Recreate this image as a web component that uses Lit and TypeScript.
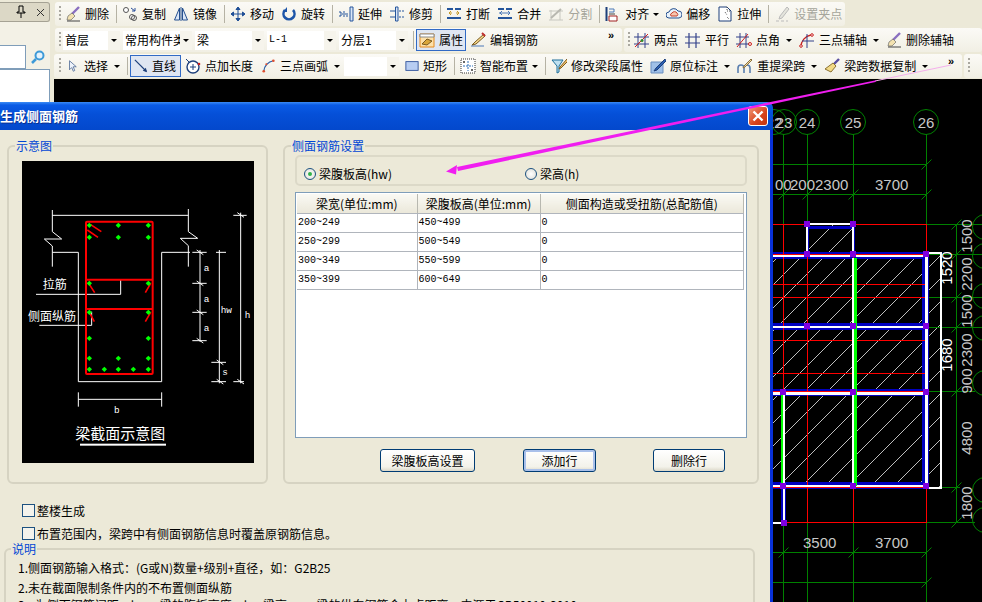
import { LitElement, html, svg, css } from "lit";
import { customElement } from "lit/decorators.js";

const brush = (handle: string, head: string) => svg`
  <path d="M2 15h13" stroke="#444" stroke-width="1"/>
  <path d="M14 1 7 8" stroke="${handle}" stroke-width="2.4"/>
  <path d="M7 7 10 10 6 14 2 14 3 10Z" fill="${head}" stroke="#555" stroke-width=".6"/>`;

const ICONS: Record<string, any> = {
  del: brush("#8a6fc0", "#f3e2b0"),
  copy: svg`<circle cx="4" cy="4" r="2.5" fill="#fff" stroke="#555"/><circle cx="10" cy="11" r="2.5" fill="#fff" stroke="#555"/><circle cx="12" cy="12" r="2.5" fill="none" stroke="#555"/><path d="M9 2l4 3M13 2v3h-3" stroke="#2a4f9a" fill="none"/>`,
  mirror: svg`<path d="M6.5 2v12H1.5ZM9.5 2v12h5Z" fill="#dbe7f7" stroke="#25508f"/><path d="M8 1v14" stroke="#25508f"/>`,
  move: svg`<path d="M8 1v14M1 8h14M8 1 6 3.5h4ZM8 15l-2-2.500h4ZM1 8l2.500-2v4ZM15 8l-2.500-2v4Z" stroke="#1f4f96" fill="#1f4f96"/>`,
  rotate: svg`<path d="M4 4a5.500 5.500 0 1 0 8 0" fill="none" stroke="#1d55a8" stroke-width="2.600"/><path d="M6 1v5H2Z" fill="#1d55a8"/>`,
  extend: svg`<path d="M1 6h2v4H1M4 8h6" fill="none" stroke="#24559c"/><path d="M5 6h2M5 10h5" stroke="#24559c" stroke-dasharray="2 1"/><path d="M12 1h3v14h-3Z" fill="#d9e6f7" stroke="#24559c"/>`,
  trim: svg`<path d="M1 5h5M1 11h5M10 5h2M13 5h2M10 11h2M13 11h2" stroke="#24559c"/><path d="M6.500 1h2.500v14H6.500Z" fill="#d9e6f7" stroke="#24559c"/>`,
  cut: svg`<path d="M1 3h6M9 3h6M1 12h14" stroke="#24559c" stroke-width="2"/><path d="M3 7h3M10 7h3M5 5l-2 2 2 2M11 5l2 2-2 2" fill="none" stroke="#c49a2a"/>`,
  merge: svg`<path d="M1 3h6M9 3h6M1 12h14" stroke="#24559c" stroke-width="2"/><path d="M2 7h11M5 5 3 7l2 2M11 5l2 2-2 2" fill="none" stroke="#4a78b8"/>`,
  split: svg`<path d="M1 14h14M3 4v10M12 4v10M1 5h14" stroke="#c8c8c0"/><path d="M3 12 13 3" stroke="#b8b8b0" stroke-width="2"/>`,
  align: svg`<path d="M1.500 1v14" stroke="#1d3f7a" stroke-width="2"/><path d="M4 3h5v3H4" fill="none" stroke="#4a78b8"/><path d="M4 10h8v5H4Z" fill="#fff" stroke="#a02020"/><path d="M4 8h6" stroke="#444"/>`,
  offset: svg`<path d="M3 12a3 3 0 0 1 0-6 5 5 0 0 1 9-1 3.500 3.500 0 0 1 1 7Z" fill="#e9f2fb" stroke="#25508f"/><path d="M5 10a2 2 0 0 1 1-3 3 3 0 0 1 5 0 2 2 0 0 1 0 3Z" fill="#f6c6b0" stroke="#c8402a"/>`,
  stretch: svg`<path d="M2 1h8l4 4v10H2Z" fill="#fff" stroke="#1d3f7a"/><path d="M10 1v4h4M8 6l2 3M10 11l2 2" fill="none" stroke="#555" stroke-dasharray="1 1"/>`,
  grip: svg`<path d="M2 15h3M7 15h3M12 15h2" stroke="#bbb"/><path d="M13 1 6 10l-1 3 3-1 7-9Z" fill="#e4e4dc" stroke="#bbb"/>`,
  props: svg`<path d="M1 2h14v13H1Z" fill="#fde0a8" stroke="#e48a1e"/><path d="M1 2h14v3H1Z" fill="#fff" stroke="#8a8a8a"/><path d="M3 12 8 7l5 2-5 4Z" fill="#d9a63a" stroke="#7a5a20"/>`,
  edit: svg`<path d="M1 14h13" stroke="#4a78b8"/><path d="M14 2 5 10l-3 3 4-1 9-8Z" fill="#f6d98e" stroke="#7a5a20"/><path d="M12 1l3 3" stroke="#c03030" stroke-width="2"/>`,
  twoPt: svg`<path d="M4 1v15M11 1v15M0 5h15M0 12h15" stroke="#33418a"/><path d="M1 15 14 2" stroke="#d02020"/><circle cx="8" cy="8.500" r="1.500" fill="#2e8b2e"/>`,
  parallel: svg`<path d="M4 1v15M11 1v15M0 5h15M0 11h15" stroke="#33418a" stroke-width="1.200"/>`,
  angle: svg`<path d="M4 1v15M10 1v15M0 5h13M0 12h13" stroke="#33418a"/><path d="M1 15 12 2" stroke="#d02020"/><circle cx="14" cy="12" r="1.500" fill="none" stroke="#d02020"/>`,
  arcAxis: svg`<path d="M2 15a12 12 0 0 1 10-12" fill="none" stroke="#c82020" stroke-width="1.300"/><path d="M8 2v14M3 9h12" stroke="#33418a"/><circle cx="13" cy="3" r="1.300" fill="#fff" stroke="#c82020"/><circle cx="2" cy="14" r="1.300" fill="#fff" stroke="#c82020"/>`,
  pointer: svg`<path d="M2 1v12l3-3 2 5 2-1-2-5h4Z" fill="#eef3fb" stroke="#44618f"/>`,
  line: svg`<path d="M1 1 14 14" stroke="#1d3f7a" stroke-width="1.300"/><path d="M15 15l-5-1.500 3.500-3.500Z" fill="#1d3f7a"/>`,
  ptLen: svg`<circle cx="8" cy="9" r="6" fill="#fff" stroke="#1d3f7a" stroke-width="1.400"/><path d="M8 6v6M5 9h6" stroke="#1d3f7a"/><path d="M1 1l3 3" stroke="#1d3f7a"/><circle cx="14" cy="6" r="1.300" fill="#c82020"/>`,
  arc: svg`<path d="M2 14A13 13 0 0 1 13 2" fill="none" stroke="#2b5fa8" stroke-width="1.400"/><circle cx="13" cy="2" r="1.500" fill="#e05030"/><circle cx="2" cy="14" r="1.500" fill="#e05030"/><circle cx="5" cy="6" r="1.200" fill="#e05030"/>`,
  rect: svg`<rect x="1" y="3" width="14" height="10" fill="#b7cdf2" stroke="#2b4f98"/>`,
  smart: svg`<rect x="1" y="1" width="14" height="14" fill="#fff" stroke="#333" stroke-dasharray="1 1"/><path d="M8 3v10M3 8h10" stroke="#2b6fb8" stroke-dasharray="2 1"/><circle cx="4" cy="4" r="1" fill="#333"/><circle cx="12" cy="12" r="1" fill="#333"/>`,
  modify: svg`<path d="M1 2h11L8 8v6l-2 1V8Z" fill="#bfe0f0" stroke="#1f6f9a"/><path d="M16 1 9 9l-1 2 2-1 7-7Z" fill="#f2c26a" stroke="#7a5a20"/>`,
  annotate: svg`<path d="M1 4h12v11H1Z" fill="#9fc0e8" stroke="#6b8fc0"/><path d="M15 1 6 10l-2 3 3-1 9-9Z" fill="#2b5fb0" stroke="#1d3f7a"/>`,
  reSpan: svg`<path d="M1 15v-5a3 3 0 0 1 6 0v5M7 15v-5a3 3 0 0 1 6 0v5" fill="none" stroke="#5a7fb0" stroke-width="1.600"/><path d="M14 1 7 8l-1 2 2-1 7-7Z" fill="#f2dca0" stroke="#8a7040"/>`,
  broom: svg`<path d="M15 1 9 7" stroke="#5a4fa0" stroke-width="2.400"/><path d="M9 5 12 8 7 14 1 11Z" fill="#f2da86" stroke="#8a7030"/>`,
};

const icon = (name: string, w = 16) =>
  html`<svg class="ico" width=${w} height="16" viewBox="0 0 16 16">${ICONS[name]}</svg>`;

const tool = (name: string, label: string, arrow = false, w = 16, cls = "") => html`
  <span class="tool ${cls}">${icon(name, w)}<span>${label}</span>${arrow ? html`<i class="caret"></i>` : ""}</span>`;

const sep = html`<i class="sep"></i>`;
const grip = html`<i class="grip"></i>`;
const more = html`<span class="more">»</span>`;

// CAD canvas data, in page coordinates
const REBAR_Y = [224.5, 254.5, 284.5, 297.5, 340.5, 373.5, 391.5, 487.5, 522.5];
const AXES = [783.5, 807.5, 853.5, 926.5];
const COLS: [number, number][] = [
  [807, 224], [853, 224], [807, 254], [853, 254], [926, 254],
  [807, 326], [853, 326], [926, 326], [783, 392], [853, 392], [926, 392],
  [783, 486], [853, 486], [926, 486], [784, 523],
];
const BUBBLES: [number, string][] = [[774, "22"], [784, "23"], [807, "24"], [853, "25"], [926, "26"]];
const SIDE_DIMS: [number, string][] = [
  [236, "1500"], [274, "2200"], [311, "1500"], [350, "2300"], [381, "900"], [438, "4800"], [503, "1800"],
];
const SIDE_BUBBLES = [227, 256, 296, 328, 383, 490, 520];
const TICKS: [number, number][] = [
  [783.5, 194.5], [807.5, 194.5], [853.5, 194.5], [926.5, 194.5], [926.5, 164.5],
  [783.5, 552.5], [853.5, 552.5], [926.5, 552.5], [926.5, 582.5],
  [956.5, 224.5], [956.5, 254.5], [956.5, 297.5], [956.5, 327.5], [956.5, 391.5], [956.5, 487.5], [956.5, 522.5],
];

// dots of the section sketch, in the sketch's own 3x units
const DOTS = [
  [268, 286], [355, 286], [445, 286], [268, 322], [355, 322], [445, 322], [268, 460], [445, 460],
  [268, 547], [445, 547], [268, 625], [445, 625], [268, 685], [355, 685], [445, 685],
  [268, 718], [313, 718], [355, 718], [400, 718], [445, 718],
];

@customElement("app-root")
export class AppRoot extends LitElement {
  static styles = css`
    :host {
      display: block;
      width: 982px;
      height: 602px;
      overflow: hidden;
      font-family: "Noto Sans CJK SC", "Liberation Sans", sans-serif;
      font-size: 12px;
      line-height: 16px;
      color: #000;
    }
    .app {
      position: relative;
      display: grid;
      grid-template-columns: 54px 1fr;
      width: 982px;
      height: 602px;
      overflow: hidden;
      background: #ece9d8;
    }

    /* left dock */
    .dock { display: flex; flex-direction: column; padding-top: 2px; }
    .dock-head {
      display: flex;
      justify-content: flex-end;
      align-items: center;
      gap: 10px;
      width: 50px;
      height: 20px;
      padding-right: 4px;
      box-sizing: border-box;
      background: #dcd8c6;
      border: 1px solid #a5a294;
      border-left: none;
      border-radius: 0 3px 3px 0;
    }
    .dock-fill { width: 50px; height: 23px; background: #f3f1e6; }
    .dock-search { display: flex; width: 50px; height: 24px; background: #f3f1e6; }
    .dock-input { width: 26px; box-sizing: border-box; background: #fff; border: 1px solid #7f9db9; border-left: none; }
    .dock-btn { display: flex; align-items: center; justify-content: center; width: 20px; margin-left: 2px; }
    .dock-list { width: 50px; flex: 1; box-sizing: border-box; background: #fff; border-right: 1px solid #7f9db9; border-top: 1px solid #7f9db9; }

    /* toolbars */
    .main { display: flex; flex-direction: column; min-width: 0; }
    .bars { height: 79px; display: flex; flex-direction: column; padding-top: 2px; box-sizing: border-box; gap: 2px; }
    .row { display: flex; height: 24px; gap: 2px; }
    .band {
      display: flex;
      align-items: center;
      height: 24px;
      box-sizing: border-box;
      padding-left: 4px;
      background: linear-gradient(#fbfaf6, #f1efe4);
      border-radius: 3px;
      white-space: nowrap;
    }
    .b1 { width: 790px; margin-left: 1px; }
    .b2 { width: 567px; margin-left: 1px; }
    .b3 { width: 358px; }
    .b4 { width: 908px; padding-left: 5px; }
    .stub { flex: 1; }
    .grip {
      width: 2px;
      height: 16px;
      flex: none;
      background: repeating-linear-gradient(#aaa8a0 0 2px, transparent 2px 4px);
    }
    .sep { width: 1px; height: 18px; margin: 0 1px 0 4px; flex: none; background: #b5b2a4; }
    .tool { display: inline-flex; align-items: center; gap: 4px; height: 22px; padding: 0 3px 0 4px; flex: none; box-sizing: border-box; }
    .tool.off { color: #a5a59b; }
    .tool.on { margin-left: 1px; padding: 0 2px; background: #dfe6f2; border: 1px solid #316ac5; }
    .tool.lined { padding: 0 4px 0 3px; }
    .tool.indent { margin-left: 3px; }
    .tool.nudge { margin-left: 2px; }
    .ico { flex: none; display: block; }
    .caret {
      width: 0;
      height: 0;
      margin-left: 2px;
      flex: none;
      border: 3px solid transparent;
      border-top: 3px solid #000;
      border-bottom: none;
    }
    .tool.tight .caret { margin-left: 0; }
    .more { margin-left: auto; padding-right: 8px; align-self: flex-start; font: bold 11px/14px "Liberation Sans", sans-serif; }
    .combo {
      display: flex;
      align-items: center;
      width: 69px;
      height: 19px;
      margin-right: 3px;
      background: #fff;
      flex: none;
    }
    .combo.first { width: 57px; margin-left: 2px; }
    .combo.last { margin-right: 1px; }
    .combo.blank { width: 55px; margin: 0 2px 0 1px; }
    .combo span { flex: 1; overflow: hidden; padding-left: 2px; white-space: nowrap; }
    .combo b {
      display: flex;
      align-items: center;
      justify-content: center;
      width: 12px;
      height: 19px;
      background: #f6f4ec;
    }
    .combo .caret { margin: 0; }
    .lat { font-family: "Liberation Mono", monospace; font-size: 10px; }

    .canvas { flex: 1; background: #000; min-height: 0; }
    .canvas svg { display: block; }
    .cad-text { font: 15px "Liberation Sans", sans-serif; fill: #c8c8c8; }

    /* dialog window */
    .dialog {
      position: absolute;
      left: 0;
      top: 102px;
      width: 773px;
      height: 500px;
      display: flex;
      flex-direction: column;
    }
    .title {
      display: flex;
      align-items: center;
      justify-content: space-between;
      height: 28px;
      flex: none;
      padding-right: 5px;
      box-sizing: border-box;
      border-radius: 0 6px 0 0;
      background: linear-gradient(#3b8cf5 0, #0a5be6 3px, #0550d8 12px, #0348cc 100%);
      color: #fff;
      font-size: 13px;
      font-weight: 700;
      text-shadow: 1px 1px 0 #0a2f90;
    }
    .close {
      width: 20px;
      height: 20px;
      box-sizing: border-box;
      border: 1px solid #fff;
      border-radius: 3px;
      background: linear-gradient(135deg, #f09a78, #d8431c 60%, #c23410);
      display: flex;
      align-items: center;
      justify-content: center;
    }
    .body {
      flex: 1;
      min-height: 0;
      padding: 8px 0 0 4px;
      background: #ece9d8;
      border-right: 3px solid #0831d9;
      overflow: hidden;
    }
    .groups { display: flex; gap: 15px; margin-left: 3px; }
    fieldset {
      margin: 0;
      padding: 0;
      min-width: 0;
      box-sizing: border-box;
      border: 2px solid #d6d3c2;
      border-radius: 6px;
    }
    legend { margin-left: 6px; padding: 0 1px; color: #0046d5; line-height: 16px; }
    .sketch-group { width: 261px; height: 346px; }
    .sketch { display: block; margin: 7px 0 0 13px; background: #000; }
    .sketch text { fill: #fff; font-family: "Noto Sans CJK SC", sans-serif; }
    .sketch .dim { font-family: "Liberation Mono", monospace; font-size: 28px; }
    .set-group { width: 476px; height: 346px; }
    .set-inner { padding: 1px 0 0 10px; }
    .radios {
      display: flex;
      align-items: center;
      width: 452px;
      height: 31px;
      padding: 6px 0 0 7px;
      box-sizing: border-box;
      border: 2px solid #dcd9c8;
      border-radius: 5px;
    }
    .radio { display: flex; align-items: center; gap: 3px; width: 221px; flex: none; }
    .dot {
      width: 12px;
      height: 12px;
      box-sizing: border-box;
      border: 1px solid #1c5180;
      border-radius: 50%;
      background: radial-gradient(#fff, #dcdcd4);
      display: flex;
      align-items: center;
      justify-content: center;
    }
    .dot i { width: 4px; height: 4px; border-radius: 50%; background: #31b24a; }
    .grid-box {
      width: 452px;
      height: 246px;
      margin-top: 6px;
      padding: 1px;
      box-sizing: border-box;
      background: #fff;
      border: 1px solid #7f9db9;
    }
    table { width: 447px; border-collapse: collapse; table-layout: fixed; }
    th {
      height: 19px;
      padding: 0;
      font-weight: 400;
      background: linear-gradient(#faf9f4, #ebe8da);
      border-right: 1px solid #b8b8b0;
      border-bottom: 1px solid #b0b5bc;
    }
    td {
      height: 18px;
      padding: 0 0 0 1px;
      font-family: "Liberation Mono", monospace;
      font-size: 10px;
      border-right: 1px solid #b0b5bc;
      border-bottom: 1px solid #b0b5bc;
    }
    .btns { display: flex; margin: 11px 0 0 85px; }
    .btn {
      display: flex;
      align-items: center;
      justify-content: center;
      height: 23px;
      box-sizing: border-box;
      border: 1px solid #003c74;
      border-radius: 3px;
      background: linear-gradient(#fff, #f3f2ea 80%, #dcd8c8);
    }
    .b-a { width: 95px; margin-right: 48px; }
    .b-b { width: 73px; margin-right: 57px; box-shadow: inset 0 0 0 2px #a9c0ea; }
    .b-c { width: 72px; }
    .checks { display: flex; flex-direction: column; gap: 10px; margin: 20px 0 0 18px; }
    .check { display: flex; align-items: center; gap: 2px; height: 13px; }
    .box { width: 13px; height: 13px; box-sizing: border-box; border: 1px solid #1c5180; background: #f4f3ec; }
    .notes { width: 751px; height: 120px; margin-top: 3px; }
    .notes legend { margin-left: 5px; line-height: 12px; }
    .note-lines { padding: 5px 0 0 12px; }
    .note-lines div { height: 20px; white-space: nowrap; }
    .note-lines .clip { margin-top: -3px; }
    .pink { position: absolute; left: 0; top: 0; pointer-events: none; }
  `;

  private cad() {
    return html`<svg width="928" height="523" viewBox="54 79 928 523" shape-rendering="crispEdges">
      <defs>
        <pattern id="hatch" width="23" height="23" patternUnits="userSpaceOnUse">
          <path d="M0 23 23 0" stroke="#bdbdbd" stroke-width="1" shape-rendering="auto"/>
        </pattern>
      </defs>
      <rect x="773" y="254" width="168" height="234" fill="url(#hatch)"/>
      <rect x="807" y="224" width="46" height="30" fill="url(#hatch)"/>
      <!-- grid lines -->
      <g stroke="#008000" fill="none">
        ${AXES.map((x) => svg`<path d="M${x} 134V224M${x} 522V602"/>`)}
        <path d="M926.5 134V254M773 164.500H926M773 194.500H926M773 552.500H926M773 582.500H926"/>
        <path d="M926 224.500H982M926 254.500H982M926 297.500H982M926 327.500H982M926 391.500H975M926 487.500H960M926 522.500H975M956.500 224V522"/>
        ${TICKS.map(([x, y]) => svg`<path shape-rendering="auto" d="M${x - 5} ${y + 5}L${x + 5} ${y - 5}"/>`)}
        ${BUBBLES.map(([x]) => svg`<circle shape-rendering="auto" cx=${x} cy="122" r="12.500"/>`)}
        ${SIDE_BUBBLES.map((y) => svg`<circle shape-rendering="auto" cx="985" cy=${y} r="12.500"/>`)}
      </g>
      ${BUBBLES.map(([x, t]) => svg`<text class="cad-text" x=${x} y="127.500" text-anchor="middle">${t}</text>`)}
      <text class="cad-text" x="775" y="189.500">00</text>
      <text class="cad-text" x="790" y="189.500">200</text>
      <text class="cad-text" x="815" y="189.500">2300</text>
      <text class="cad-text" x="875" y="189.500">3700</text>
      <text class="cad-text" x="803" y="547.500">3500</text>
      <text class="cad-text" x="875" y="547.500">3700</text>
      ${SIDE_DIMS.map(([y, t]) => svg`<text class="cad-text" text-anchor="middle" transform="translate(972 ${y}) rotate(-90)">${t}</text>`)}
      <!-- blue beams -->
      <g fill="#0000c0">
        <rect x="773" y="252" width="156" height="7"/>
        <rect x="773" y="323" width="156" height="7"/>
        <rect x="773" y="389" width="156" height="7"/>
        <rect x="773" y="482" width="156" height="7"/>
        <rect x="922" y="252" width="7" height="237"/>
        <rect x="806" y="224" width="3" height="30"/>
        <rect x="852" y="224" width="3" height="30"/>
        <rect x="806" y="226" width="48" height="3"/>
        <rect x="781" y="489" width="5" height="35"/>
      </g>
      <!-- red axes -->
      <g stroke="#ff0000" fill="none">
        ${REBAR_Y.map((y) => svg`<path d="M773 ${y}H926.500"/>`)}
        ${AXES.map((x) => svg`<path d="M${x} 224V522"/>`)}
      </g>
      <!-- white and green walls -->
      <g fill="#fff">
        <rect x="773" y="255" width="155" height="2"/>
        <rect x="773" y="326" width="155" height="2"/>
        <rect x="773" y="392" width="155" height="3"/>
        <rect x="773" y="485" width="155" height="2"/>
        <rect x="925" y="255" width="3" height="232"/>
        <rect x="806" y="223" width="47" height="2"/>
        <rect x="806" y="224" width="2" height="30"/>
        <rect x="852" y="224" width="2" height="30"/>
        <rect x="852" y="258" width="2" height="228"/>
        <rect x="783" y="395" width="2" height="127"/>
        <rect x="773" y="522" width="10" height="2"/>
        <rect x="927" y="252" width="14" height="2"/>
        <rect x="940" y="252" width="2" height="237"/>
        <rect x="927" y="487" width="14" height="2"/>
      </g>
      <g fill="#00ff00">
        <rect x="854" y="258" width="3" height="228"/>
        <rect x="781" y="395" width="2" height="88"/>
      </g>
      <g fill="#8000e0">
        ${COLS.map(([x, y]) => svg`<rect x=${x - 3} y=${y - 3} width="6" height="6"/>`)}
      </g>
      <text class="cad-text" style="fill:#fff" text-anchor="middle" transform="translate(952 268) rotate(-90)">1520</text>
      <text class="cad-text" style="fill:#fff" text-anchor="middle" transform="translate(952 355) rotate(-90)">1680</text>
    </svg>`;
  }

  private sketch() {
    return html`<svg class="sketch" width="232" height="302" viewBox="66 93 696 906">
      <g fill="none" stroke="#fff" stroke-width="3">
        <path d="M157 240V305L185 327H133L157 348V410M157 256H565M565 237V305L593 325H541L565 347V410"/>
        <path d="M157 367H235V755H485V367H570"/>
        <path d="M108 493H362V449M118 586H275V545"/>
        <path d="M600 360V635M577 367H620M577 460H620M577 547H620M577 632H620"/>
        <path d="M658 360V760M648 367H678M634 697H678M634 755H678"/>
        <path d="M722 248V760M700 256H740M700 755H732"/>
        <path d="M235 808H485M235 787V830M485 787V830"/>
        <path d="M590 360l20 14M590 453l20 14M590 540l20 14M590 625l20 14M650 690l20 14M650 748l20 14M712 248l20 14M712 748l20 14"/>
      </g>
      <g fill="none" stroke="#ff0000" stroke-width="6">
        <rect x="258" y="275" width="200" height="457" rx="3"/>
        <path d="M258 449H458M258 537H458"/>
        <path d="M272 284 304 305M262 300 294 322M266 460 284 488M452 460 436 488M268 547 283 575M452 547 436 575" stroke-width="5"/>
      </g>
      <g fill="#00ff00">
        ${DOTS.map(([x, y]) => svg`<path d="M${x - 8} ${y}L${x} ${y - 8}L${x + 8} ${y}L${x} ${y + 8}Z"/>`)}
      </g>
      <text x="128" y="478" font-size="36">拉筋</text>
      <text x="84" y="572" font-size="36">侧面纵筋</text>
      <text class="dim" x="611" y="422">a</text>
      <text class="dim" x="611" y="515">a</text>
      <text class="dim" x="611" y="603">a</text>
      <text class="dim" x="662" y="550">hw</text>
      <text class="dim" x="667" y="735">s</text>
      <text class="dim" x="734" y="565">h</text>
      <text class="dim" x="342" y="848">b</text>
      <text x="226" y="927" font-size="45">梁截面示意图</text>
      <rect x="240" y="941" width="258" height="6" fill="#fff"/>
    </svg>`;
  }

  render() {
    const rows = [
      ["200~249", "450~499"],
      ["250~299", "500~549"],
      ["300~349", "550~599"],
      ["350~399", "600~649"],
    ];
    return html`
      <div class="app">
        <div class="dock">
          <div class="dock-head">
            <svg width="10" height="14" viewBox="0 0 10 14"><path d="M3 1h4v6h2v1H1V7h2ZM5 8v5" fill="none" stroke="#000"/></svg>
            <svg width="9" height="9" viewBox="0 0 9 9"><path d="M1 1l7 7M8 1 1 8" stroke="#333"/></svg>
          </div>
          <div class="dock-fill"></div>
          <div class="dock-search">
            <div class="dock-input"></div>
            <div class="dock-btn">
              <svg width="16" height="16" viewBox="0 0 16 16"><circle cx="9.500" cy="6.500" r="4" fill="#e4f2fc" stroke="#3d9ad8" stroke-width="2"/><path d="M6 10l-4 4" stroke="#3d9ad8" stroke-width="2.500"/></svg>
            </div>
          </div>
          <div class="dock-list"></div>
        </div>

        <div class="main">
          <div class="bars">
            <div class="row">
              <div class="band b1">
                ${grip}${tool("del", "删除")}${sep}${tool("copy", "复制")}${tool("mirror", "镜像")}${sep}
                ${tool("move", "移动")}${tool("rotate", "旋转")}${sep}${tool("extend", "延伸")}${tool("trim", "修剪")}${sep}
                ${tool("cut", "打断")}${tool("merge", "合并")}${tool("split", "分割", false, 16, "off")}${sep}
                ${tool("align", "对齐", true, 16, "tight")}${tool("offset", "偏移")}${tool("stretch", "拉伸")}${sep}
                ${tool("grip", "设置夹点", false, 16, "off")}
              </div>
            </div>
            <div class="row">
              <div class="band b2">
                ${grip}
                <div class="combo first"><span>首层</span><b><i class="caret"></i></b></div>
                <div class="combo"><span>常用构件类型</span><b><i class="caret"></i></b></div>
                <div class="combo"><span>梁</span><b><i class="caret"></i></b></div>
                <div class="combo"><span class="lat">L-1</span><b><i class="caret"></i></b></div>
                <div class="combo last"><span>分层1</span><b><i class="caret"></i></b></div>
                ${sep}${tool("props", "属性", false, 16, "on")}${tool("edit", "编辑钢筋")}${more}
              </div>
              <div class="band b3">
                ${grip}${tool("twoPt", "两点")}${tool("parallel", "平行")}${tool("angle", "点角", true)}
                ${tool("arcAxis", "三点辅轴", true)}${tool("del", "删除辅轴")}
              </div>
            </div>
            <div class="row">
              <div class="band b4">
                ${grip}${tool("pointer", "选择", true, 12, "indent")}${sep}${tool("line", "直线", false, 14, "on lined")}
                ${tool("ptLen", "点加长度")}${tool("arc", "三点画弧", true, 14, "nudge")}
                <div class="combo blank"><span></span><b><i class="caret"></i></b></div>
                ${tool("rect", "矩形", false, 14)}${sep}${tool("smart", "智能布置", true, 16, "tight")}${sep}
                ${tool("modify", "修改梁段属性")}${tool("annotate", "原位标注", true)}${tool("reSpan", "重提梁跨", true)}
                ${tool("broom", "梁跨数据复制", true)}${more}
              </div>
              <div class="band stub">${grip}</div>
            </div>
          </div>
          <div class="canvas">${this.cad()}</div>
        </div>

        <div class="dialog">
          <div class="title">
            <span>生成侧面钢筋</span>
            <div class="close">
              <svg width="12" height="12" viewBox="0 0 12 12"><path d="M1.500 1.500l9 9M10.500 1.500l-9 9" stroke="#fff" stroke-width="2.400"/></svg>
            </div>
          </div>
          <div class="body">
            <div class="groups">
              <fieldset class="sketch-group">
                <legend>示意图</legend>
                ${this.sketch()}
              </fieldset>
              <fieldset class="set-group">
                <legend>侧面钢筋设置</legend>
                <div class="set-inner">
                  <div class="radios">
                    <label class="radio"><span class="dot"><i></i></span>梁腹板高(hw)</label>
                    <label class="radio"><span class="dot"></span>梁高(h)</label>
                  </div>
                  <div class="grid-box">
                    <table>
                      <colgroup><col style="width:120px" /><col style="width:123px" /><col /></colgroup>
                      <tr><th>梁宽(单位:mm)</th><th>梁腹板高(单位:mm)</th><th>侧面构造或受扭筋(总配筋值)</th></tr>
                      ${rows.map((r) => html`<tr><td>${r[0]}</td><td>${r[1]}</td><td>0</td></tr>`)}
                    </table>
                  </div>
                  <div class="btns">
                    <div class="btn b-a">梁腹板高设置</div>
                    <div class="btn b-b">添加行</div>
                    <div class="btn b-c">删除行</div>
                  </div>
                </div>
              </fieldset>
            </div>
            <div class="checks">
              <label class="check"><span class="box"></span>整楼生成</label>
              <label class="check"><span class="box"></span>布置范围内，梁跨中有侧面钢筋信息时覆盖原钢筋信息。</label>
            </div>
            <fieldset class="notes">
              <legend>说明</legend>
              <div class="note-lines">
                <div>1.侧面钢筋输入格式：(G或N)数量+级别+直径，如：G2B25</div>
                <div>2.未在截面限制条件内的不布置侧面纵筋</div>
                <div class="clip">3.a为侧面钢筋间距；hw：梁的腹板高度；h：梁高；s：梁的纵向钢筋合力点距离，来源于GB50010-2010</div>
              </div>
            </fieldset>
          </div>
        </div>

        <svg class="pink" width="982" height="602" viewBox="0 0 982 602">
          <path d="M951 65 875 81" stroke="#f4b0ec" stroke-width="1"/>
          <path d="M876 80.200 875.500 82 458 171 457 167Z" fill="#f01ef0"/>
          <path d="M446 171.500 457 165 456 174.500Z" fill="#f01ef0"/>
        </svg>
      </div>
    `;
  }
}
